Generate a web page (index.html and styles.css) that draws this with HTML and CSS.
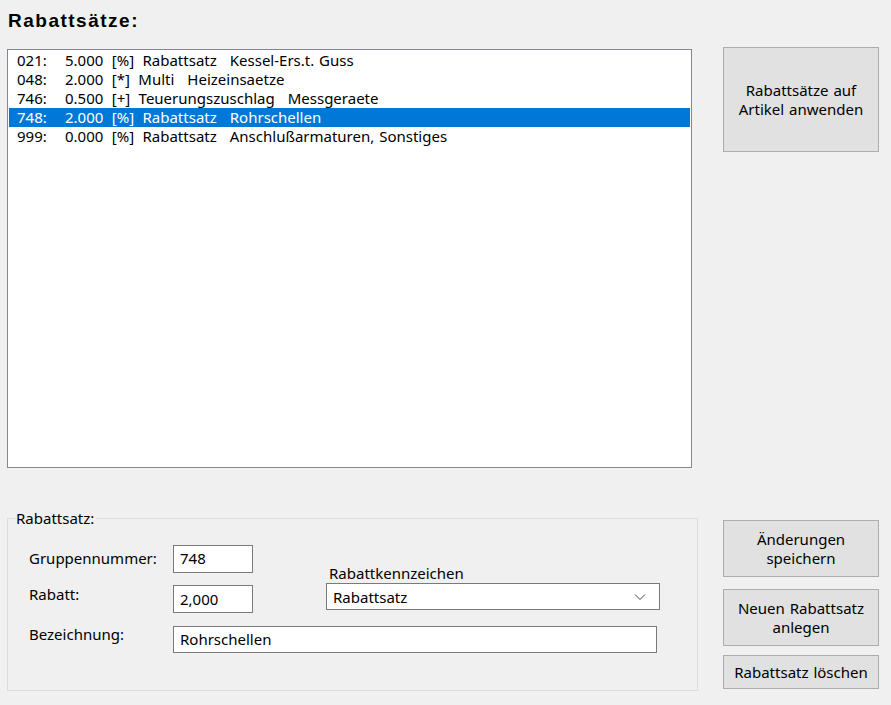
FILE: index.html
```html
<!DOCTYPE html>
<html lang="de">
<head>
  <meta charset="UTF-8"/>
  <title>Rabattsätze</title>
  <link rel="stylesheet" href="styles.css">
</head>
<body>
  <h1 class="title">Rabattsätze:</h1>

  <div class="top">
    <ul class="listbox">
      <li><span class="nr">021:</span><span class="mid">5.000 [%] Rabattsatz</span><span class="bez">Kessel-Ers.t. Guss</span></li>
      <li><span class="nr">048:</span><span class="mid">2.000 [*] Multi</span><span class="bez">Heizeinsaetze</span></li>
      <li><span class="nr">746:</span><span class="mid">0.500 [+] Teuerungszuschlag</span><span class="bez">Messgeraete</span></li>
      <li class="selected"><span class="nr">748:</span><span class="mid">2.000 [%] Rabattsatz</span><span class="bez">Rohrschellen</span></li>
      <li><span class="nr">999:</span><span class="mid">0.000 [%] Rabattsatz</span><span class="bez">Anschlußarmaturen, Sonstiges</span></li>
    </ul>
    <button class="btn btn-apply">Rabattsätze auf<br>Artikel anwenden</button>
  </div>

  <div class="bottom">
    <fieldset class="group">
      <legend>Rabattsatz:</legend>
      <div class="fields">
        <label class="lbl lbl-nr">Gruppennummer:</label>
        <div class="input in-nr">748</div>
        <label class="lbl lbl-rabatt">Rabatt:</label>
        <div class="input in-rabatt">2,000</div>
        <div class="combo-wrap">
          <div class="combo-label">Rabattkennzeichen</div>
          <div class="combo">
            <span>Rabattsatz</span>
            <svg width="12" height="8" viewBox="0 0 12 8"><path d="M1 1.5 L6 6.5 L11 1.5" fill="none" stroke="#444" stroke-width="1"/></svg>
          </div>
        </div>
        <label class="lbl lbl-bez">Bezeichnung:</label>
        <div class="input in-bez">Rohrschellen</div>
      </div>
    </fieldset>
    <div class="actions">
      <button class="btn btn-save">Änderungen<br>speichern</button>
      <button class="btn btn-new">Neuen Rabattsatz<br>anlegen</button>
      <button class="btn btn-del">Rabattsatz löschen</button>
    </div>
  </div>
</body>
</html>
```
FILE: styles.css
```css
*{box-sizing:border-box;margin:0;padding:0}
body{background:#f0f0f0;color:#000;font-family:'Noto Sans',sans-serif;font-size:15px;word-spacing:1px;width:891px;height:705px;overflow:hidden}
.title{font-family:'Liberation Sans',Arial,sans-serif;font-weight:bold;font-size:19px;letter-spacing:1.5px;word-spacing:0;padding:10px 0 0 8px;line-height:22px;height:49px}

.top{display:flex;align-items:flex-start;padding-left:7px}
.listbox{list-style:none;width:685px;height:419px;background:#fff;border:1px solid #828790;padding:1px 1px;overflow:hidden}
.listbox li{height:19px;line-height:19px;padding-left:8px;white-space:nowrap}
.listbox li.selected{background:#0078d7;color:#fff}
.listbox .nr{display:inline-block;width:48px}
.listbox .mid{word-spacing:4.5px}
.listbox .bez{margin-left:13px}

.btn{background:#e1e1e1;border:1px solid #adadad;font-family:'Noto Sans',sans-serif;font-size:15px;word-spacing:1px;line-height:19px;color:#000;text-align:center;width:156px}
.btn-apply{margin:-2px 0 0 31px;height:105px}

.bottom{display:flex;align-items:flex-start;padding-left:7px;margin-top:44px}
.group{width:691px;height:182px;border:1px solid #dcdcdc;padding:17px 0 0 21px;margin-top:-3px}
.group legend{margin-left:-13px;padding:0 2px 0 0;line-height:19px}

.fields{display:grid;grid-template-columns:144px 80px 73px 334px;grid-template-rows:28px 28px 28px;row-gap:12px}
.lbl{line-height:19px}
.lbl-nr{grid-column:1;grid-row:1;padding-top:4px}
.lbl-rabatt{grid-column:1;grid-row:2;padding-top:0}
.lbl-bez{grid-column:1;grid-row:3;padding-top:0}
.input{background:#fff;border:1px solid #7a7a7a;padding:0 6px;line-height:24px}
.in-nr{grid-column:2;grid-row:1}
.in-rabatt{grid-column:2;grid-row:2;line-height:26px}
.in-bez{grid-column:2/5;grid-row:3;width:484px;margin-top:1px}
.combo-wrap{grid-column:4;grid-row:1/3;align-self:end;margin:0 0 3px 0}
.combo-label{padding-left:3px;line-height:19px}
.combo{display:flex;align-items:center;justify-content:space-between;height:27px;background:#fff;border:1px solid #7a7a7a;padding:0 13px 0 6px}

.actions{display:flex;flex-direction:column;margin-left:25px;gap:12px}
.btn-save{height:57px;margin-top:8px}
.btn-new{height:57px;margin-top:0}
.btn-del{height:34px;margin-top:-3px}
```
